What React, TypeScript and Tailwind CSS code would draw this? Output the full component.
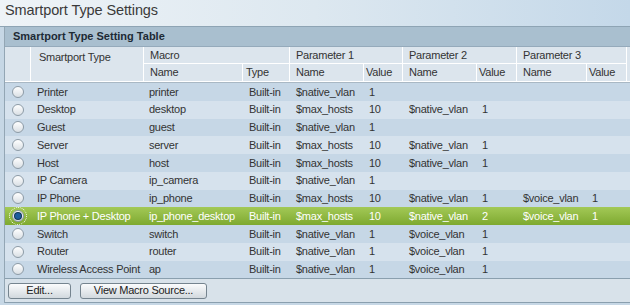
import React from "react";

type Row = {
  type: string;
  macro: string;
  p: [string, string][];
  selected?: boolean;
};

const rows: Row[] = [
  { type: "Printer", macro: "printer", p: [["$native_vlan", "1"]] },
  { type: "Desktop", macro: "desktop", p: [["$max_hosts", "10"], ["$native_vlan", "1"]] },
  { type: "Guest", macro: "guest", p: [["$native_vlan", "1"]] },
  { type: "Server", macro: "server", p: [["$max_hosts", "10"], ["$native_vlan", "1"]] },
  { type: "Host", macro: "host", p: [["$max_hosts", "10"], ["$native_vlan", "1"]] },
  { type: "IP Camera", macro: "ip_camera", p: [["$native_vlan", "1"]] },
  {
    type: "IP Phone",
    macro: "ip_phone",
    p: [["$max_hosts", "10"], ["$native_vlan", "1"], ["$voice_vlan", "1"]],
  },
  {
    type: "IP Phone + Desktop",
    macro: "ip_phone_desktop",
    p: [["$max_hosts", "10"], ["$native_vlan", "2"], ["$voice_vlan", "1"]],
    selected: true,
  },
  { type: "Switch", macro: "switch", p: [["$native_vlan", "1"], ["$voice_vlan", "1"]] },
  { type: "Router", macro: "router", p: [["$native_vlan", "1"], ["$voice_vlan", "1"]] },
  {
    type: "Wireless Access Point",
    macro: "ap",
    p: [["$native_vlan", "1"], ["$voice_vlan", "1"]],
  },
];

const cols =
  "grid grid-cols-[26px_113px_99px_47px_74px_39px_74px_40px_70px_40px_60px]";

function Radio({ checked }: { checked?: boolean }) {
  return (
    <span
      className={
        "flex items-center justify-center w-[12px] h-[12px] rounded-full border border-[#8d9ba6] bg-gradient-to-b from-white to-[#d9dfe4] " +
        (checked ? "outline outline-1 outline-dotted outline-white outline-offset-[2px]" : "")
      }
    >
      {checked && (
        <span className="w-[6px] h-[6px] rounded-full bg-[#1d5c9c] shadow-[0_0_0_1px_#0e3558]" />
      )}
    </span>
  );
}

function Btn({ children, w }: { children: React.ReactNode; w: string }) {
  return (
    <button
      className={
        w +
        " h-[16px] rounded-[3px] border border-[#75848f] bg-gradient-to-b from-[#fbfcfd] to-[#d2d9de] text-[11px] leading-none text-[#222] flex items-center justify-center"
      }
    >
      {children}
    </button>
  );
}

export default function App() {
  return (
    <div className="w-[630px] h-[305px] overflow-hidden bg-[#c6d7e5] font-['Liberation_Sans',Arial,sans-serif] text-[#333] tracking-[-0.25px]">
      {/* page title */}
      <div className="h-[27px] pl-[5px] pt-[1px] bg-gradient-to-r from-[#eef3f7] via-[#dde8f0] to-[#c4d8e9] border-b border-[#8ea4b4]">
        <h1 className="text-[14.5px] leading-[18px] text-[#3a3a3a] tracking-[-0.1px]">
          Smartport Type Settings
        </h1>
      </div>

      <div className="ml-[4px] w-[700px] border-l border-[#93a6b4]">
        <div className="h-[20px] flex items-center pl-[8px] bg-[#a9bfcf] border-b border-[#95aabb] text-[11px] font-bold text-[#1d2a35] tracking-normal">
          Smartport Type Setting Table
        </div>

        {/* column headings */}
        <div
          className={
            cols +
            " grid-rows-[17px_18px] bg-[#dce5ed] text-[11px] border-b border-[#a9b8c4] [&>div]:border-r [&>div]:border-b [&>div]:border-white [&>div]:flex [&>div]:items-center"
          }
        >
          <div className="row-span-2" />
          <div className="row-span-2 !items-start pt-[2px] pl-[8px]">Smartport Type</div>
          <div className="col-span-2 pl-[6px]">Macro</div>
          <div className="col-span-2 pl-[6px]">Parameter 1</div>
          <div className="col-span-2 pl-[6px]">Parameter 2</div>
          <div className="col-span-2 pl-[6px]">Parameter 3</div>
          <div className="row-span-2" />
          <div className="pl-[6px]">Name</div>
          <div className="pl-[3px]">Type</div>
          <div className="pl-[6px]">Name</div>
          <div className="pl-[2px]">Value</div>
          <div className="pl-[6px]">Name</div>
          <div className="pl-[2px]">Value</div>
          <div className="pl-[6px]">Name</div>
          <div className="pl-[2px]">Value</div>
        </div>

        {/* table body */}
        {rows.map((r, i) => {
          const bg = r.selected
            ? "bg-gradient-to-b from-[#a3c956] to-[#7ea92f] text-white"
            : i % 2 === 0
              ? "bg-[#c6d7e6]"
              : "bg-[#d6e2ed]";
          const cells: string[] = [];
          for (let k = 0; k < 3; k++) {
            cells.push(r.p[k]?.[0] ?? "", r.p[k]?.[1] ?? "");
          }
          return (
            <div
              key={r.type}
              className={cols + " h-[17.75px] items-center text-[11px] whitespace-nowrap " + bg}
            >
              <div className="flex justify-center pr-[1px]">
                <Radio checked={r.selected} />
              </div>
              <div className="pl-[6px]">{r.type}</div>
              <div className="pl-[5px]">{r.macro}</div>
              <div className="pl-[6px]">Built-in</div>
              {cells.map((c, k) => (
                <div key={k} className={k % 2 === 0 ? "pl-[6px]" : "pl-[5px]"}>
                  {c}
                </div>
              ))}
              <div />
            </div>
          );
        })}

        {/* actions */}
        <div className="h-[25px] flex items-center gap-[9px] pl-[3px] bg-[#d8e2ea] border-t border-b border-[#8a9fae]">
          <Btn w="w-[63px]">Edit...</Btn>
          <Btn w="w-[127px]">View Macro Source...</Btn>
        </div>
      </div>
    </div>
  );
}
